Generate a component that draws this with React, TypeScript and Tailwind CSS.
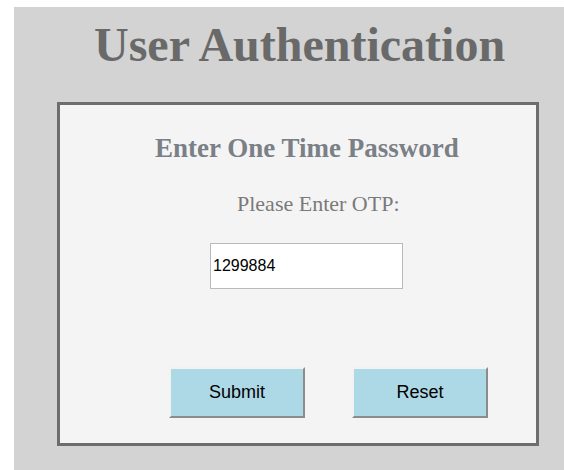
import React, { useState } from 'react';

function OtpButton({ label, onClick }: { label: string; onClick?: () => void }) {
  return (
    <button
      type="button"
      onClick={onClick}
      className="w-[136px] h-[51px] bg-[#add8e6] font-['Liberation_Sans',Arial,sans-serif] text-[18px] text-black border-2 border-t-[#f2f2f2] border-l-[#f2f2f2] border-b-[#8c8c8c] border-r-[#8c8c8c]"
    >
      {label}
    </button>
  );
}

export default function App() {
  const [otp, setOtp] = useState('1299884');

  return (
    <div className="w-[564px] h-[470px] bg-white flex flex-col overflow-hidden">
      <div className="ml-[14px] mt-[7px] flex-1 bg-[#d3d3d3] flex flex-col font-['Liberation_Serif','Times_New_Roman',serif]">
        {/* page heading */}
        <h1 className="mt-[14px] ml-[80px] text-[48px] leading-none font-bold text-[#696969]">
          User Authentication
        </h1>

        {/* OTP card */}
        <div className="mt-[33px] ml-[43px] w-[482px] h-[344px] bg-[#f4f4f4] border-[3px] border-[#6d6d6d] flex flex-col">
          <h2 className="mt-[30px] ml-[95px] text-[27px] leading-none font-bold text-[#7b7f86]">
            Enter One Time Password
          </h2>
          <p className="mt-[31px] ml-[177px] text-[22px] leading-none text-[#7a7a7a]">
            Please Enter OTP:
          </p>
          <input
            value={otp}
            onChange={(e) => setOtp(e.target.value)}
            className="mt-[28px] ml-[150px] w-[193px] h-[46px] bg-white border border-[#b9b9c0] px-[2px] font-['Liberation_Sans',Arial,sans-serif] text-[16px] text-black outline-none"
          />
          <div className="mt-[78px] ml-[109px] flex gap-[47px]">
            <OtpButton label="Submit" />
            <OtpButton label="Reset" onClick={() => setOtp('')} />
          </div>
        </div>
      </div>
    </div>
  );
}
